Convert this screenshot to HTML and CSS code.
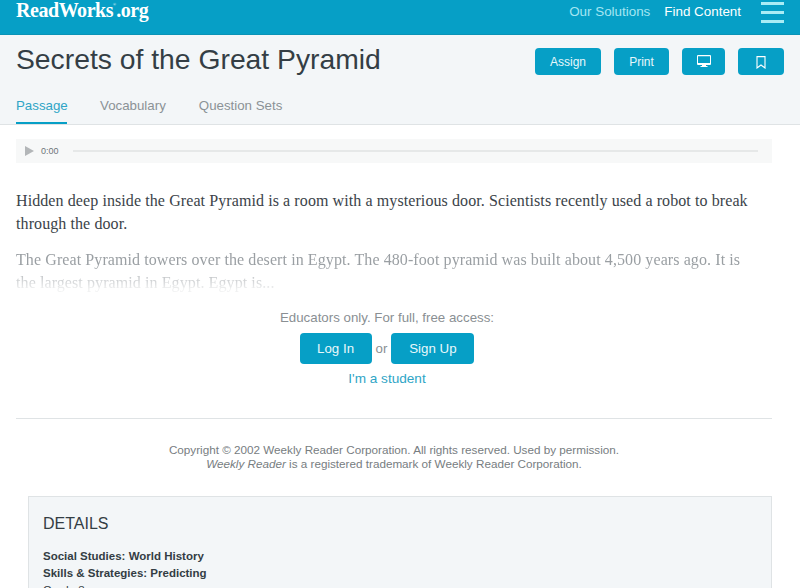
FILE: index.html
```html
<!DOCTYPE html>
<html lang="en">
<head>
    <meta charset="UTF-8">
    <meta name="viewport" content="width=device-width, initial-scale=1.0">
    <title>Secrets of the Great Pyramid</title>
    <link rel="stylesheet" href="styles.css">
</head>
<body>
    <header class="topbar">
        <a href="#" class="logo">ReadWorks<sup class="logo-mark">®</sup>.org</a>
        <nav class="topnav">
            <a href="#" class="topnav-muted">Our Solutions</a>
            <a href="#">Find Content</a>
        </nav>
        <div class="burger"><span></span><span></span><span></span></div>
    </header>

    <section class="title-area">
        <div class="title-row">
            <h1>Secrets of the Great Pyramid</h1>
            <div class="actions">
                <a href="#" class="action-btn btn-assign">Assign</a>
                <a href="#" class="action-btn btn-print">Print</a>
                <a href="#" class="action-btn btn-screen">
                    <svg width="14" height="13" viewBox="0 0 14 13"><path fill="#fff" d="M1 0h12a1 1 0 0 1 1 1v8a1 1 0 0 1-1 1H9v1h1.500v1h-7v-1H5v-1H1a1 1 0 0 1-1-1V1a1 1 0 0 1 1-1zm0 1.200v6.900h12V1.200z"/></svg>
                </a>
                <a href="#" class="action-btn btn-save">
                    <svg width="10" height="14" viewBox="0 0 10 14"><path fill="none" stroke="#fff" stroke-width="1.100" d="M1 1.600h8v11.400L5 10 1 13z"/></svg>
                </a>
            </div>
        </div>
        <ul class="tabs">
            <li class="active">Passage</li>
            <li>Vocabulary</li>
            <li>Question Sets</li>
        </ul>
    </section>

    <main class="content">
        <div class="player">
            <span class="play"></span>
            <span class="time">0:00</span>
            <span class="track"></span>
        </div>

        <div class="passage">
            <p>Hidden deep inside the Great Pyramid is a room with a mysterious door. Scientists recently used a robot to break through the door.</p>
            <p class="faded">The Great Pyramid towers over the desert in Egypt. The 480-foot pyramid was built about 4,500 years ago. It is the largest pyramid in Egypt. Egypt is...</p>
        </div>

        <div class="signup">
            <p class="signup-note">Educators only. For full, free access:</p>
            <div class="signup-btns">
                <a href="#" class="big-btn btn-login">Log In</a>
                <span>or</span>
                <a href="#" class="big-btn btn-signup">Sign Up</a>
            </div>
            <a href="#" class="student">I'm a student</a>
        </div>

        <div class="copyright">
            <p>Copyright © 2002 Weekly Reader Corporation. All rights reserved. Used by permission.</p>
            <p><em>Weekly Reader</em> is a registered trademark of Weekly Reader Corporation.</p>
        </div>

        <div class="details">
            <h2>DETAILS</h2>
            <p><strong>Social Studies: World History</strong></p>
            <p><strong>Skills &amp; Strategies: Predicting</strong></p>
            <p>Grade 3</p>
        </div>
    </main>
</body>
</html>
```

FILE: styles.css
```css
html, body {
    height: 588px;
    overflow: hidden;
}
body {
    font-family: "Liberation Sans", Arial, sans-serif;
    color: #333d44;
    margin: 0;
    background-color: #fff;
}
a {
    text-decoration: none;
}
.topbar {
    display: flex;
    align-items: flex-start;
    height: 34px;
    padding: 0 16px;
    background-color: #069fc6;
    border-bottom: 1px solid #0a93b6;
}
.logo {
    font-family: "Liberation Serif", serif;
    font-weight: bold;
    font-size: 20px;
    letter-spacing: -0.45px;
    line-height: 20px;
    color: #fff;
}
.logo-mark {
    font-size: 4px;
    font-weight: normal;
    vertical-align: 11px;
    line-height: 0;
    letter-spacing: 0;
}
.topnav {
    margin-left: auto;
    display: flex;
    gap: 14px;
    font-size: 13.4px;
    line-height: 23px;
}
.topnav a {
    color: #fff;
}
.topnav .topnav-muted {
    color: #a5e6f2;
}
.burger {
    display: flex;
    flex-direction: column;
    gap: 6px;
    width: 23px;
    margin-left: 20px;
    padding-top: 2px;
}
.burger span {
    height: 3px;
    background-color: #a9ecf5;
}
.title-area {
    background-color: #f3f6f8;
    border-bottom: 1px solid #dfe3e5;
    padding: 0 16px;
    height: 89px;
}
.title-row {
    display: flex;
    justify-content: space-between;
    padding-top: 12px;
    height: 51px;
}
h1 {
    margin: 0;
    font-weight: normal;
    font-size: 28.3px;
    line-height: 24px;
    color: #343e45;
}
.actions {
    display: flex;
    gap: 13px;
    height: 27px;
    margin-top: 1px;
}
.action-btn {
    display: flex;
    align-items: center;
    justify-content: center;
    box-sizing: border-box;
    height: 27px;
    background-color: #069fc6;
    color: #e6f7fb;
    font-size: 12px;
    border-radius: 4px;
}
.btn-assign { width: 66px; }
.btn-print { width: 55px; }
.btn-screen { width: 43px; }
.btn-save { width: 46px; }
.tabs {
    list-style-type: none;
    display: flex;
    gap: 33px;
    margin: 0;
    padding: 0;
    font-size: 13.3px;
    color: #8b9296;
}
.tabs li {
    height: 26px;
    line-height: 16px;
}
.tabs .active {
    width: 51px;
    color: #2fa5c6;
    border-bottom: 2px solid #069fc6;
    height: 24px;
}
.content {
    padding: 14px 28px 0 16px;
}
.player {
    display: flex;
    align-items: center;
    height: 24px;
    background-color: #f7f8f8;
    padding: 0 14px 0 9px;
}
.play {
    width: 0;
    height: 0;
    border-left: 9px solid #b3b6b8;
    border-top: 5px solid transparent;
    border-bottom: 5px solid transparent;
}
.time {
    margin-left: 7px;
    font-size: 9px;
    color: #6e7478;
}
.track {
    flex: 1;
    height: 2px;
    margin-left: 14px;
    background-color: #e6e8e8;
}
.passage {
    font-family: "Liberation Serif", serif;
    font-size: 16px;
    letter-spacing: 0.09px;
    line-height: 23px;
    margin-top: 26px;
}
.passage p {
    margin: 0 0 13px;
    color: #3b4349;
}
.passage .faded {
    color: #9a9fa3;
    margin: 0;
    padding-right: 20px;
    -webkit-mask-image: linear-gradient(#000 35%, rgba(0, 0, 0, 0.15) 90%);
    mask-image: linear-gradient(#000 35%, rgba(0, 0, 0, 0.15) 90%);
}
.signup {
    text-align: center;
    margin-top: 16px;
    padding-right: 14px;
    font-size: 13.3px;
    color: #8a8f93;
}
.signup-note {
    margin: 0;
    line-height: 16px;
}
.signup-btns {
    display: flex;
    justify-content: center;
    align-items: center;
    gap: 4px;
    margin-top: 7px;
}
.big-btn {
    display: block;
    height: 31px;
    line-height: 31px;
    background-color: #069fc6;
    color: #e9f8fb;
    border-radius: 4px;
}
.btn-login { width: 72px; }
.btn-signup { width: 83px; }
.student {
    display: block;
    margin-top: 7px;
    color: #2fa5c6;
    font-size: 13.6px;
    line-height: 16px;
}
.copyright {
    border-top: 1px solid #dfe3e5;
    margin-top: 31px;
    padding-top: 24px;
    text-align: center;
    font-size: 11.7px;
    line-height: 14px;
    color: #777d81;
}
.copyright p {
    margin: 0;
}
.details {
    margin: 25px 0 0 12px;
    background-color: #f3f6f8;
    border: 1px solid #dfe3e5;
    padding: 17px 14px;
    font-size: 11.5px;
    line-height: 17px;
}
.details h2 {
    margin: 0 0 14px;
    font-weight: normal;
    font-size: 16px;
    line-height: 20px;
}
.details p {
    margin: 0;
}
```
